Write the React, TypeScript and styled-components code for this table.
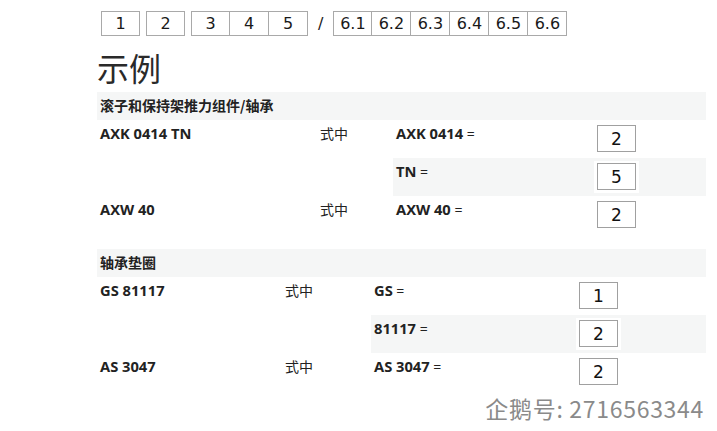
import React from 'react';
import styled, { createGlobalStyle } from 'styled-components';

type Part = { name: string; value: string };
type Item = { code: string; parts: Part[] };
type Section = { title: string; cols: [number, number, number]; items: Item[] };

const sections: Section[] = [
    {
        title: '滚子和保持架推力组件/轴承',
        cols: [220, 76, 201],
        items: [
            { code: 'AXK 0414 TN', parts: [{ name: 'AXK 0414', value: '2' }, { name: 'TN', value: '5' }] },
            { code: 'AXW 40', parts: [{ name: 'AXW 40', value: '2' }] },
        ],
    },
    {
        title: '轴承垫圈',
        cols: [185, 89, 205],
        items: [
            { code: 'GS 81117', parts: [{ name: 'GS', value: '1' }, { name: '81117', value: '2' }] },
            { code: 'AS 3047', parts: [{ name: 'AS 3047', value: '2' }] },
        ],
    },
];

const App: React.FC = () => {
    return (
        <>
            <GlobalStyle />
            <Page>
                <Nav>
                    <Step>1</Step>
                    <Step>2</Step>
                    <StepGroup>
                        <Step>3</Step>
                        <Step>4</Step>
                        <Step>5</Step>
                    </StepGroup>
                    <Slash>/</Slash>
                    <StepGroup>
                        {['6.1', '6.2', '6.3', '6.4', '6.5', '6.6'].map((s) => (
                            <Step key={s}>{s}</Step>
                        ))}
                    </StepGroup>
                </Nav>

                <Heading>示例</Heading>

                {sections.map((section) => (
                    <Table key={section.title} $c1={section.cols[0]} $c2={section.cols[1]}>
                        <Band>{section.title}</Band>
                        {section.items.map((item) => (
                            <React.Fragment key={item.code}>
                                <Code>{item.code}</Code>
                                <Where>式中</Where>
                                <Parts>
                                    {item.parts.map((part, index) => (
                                        <PartRow key={part.name} $shaded={index % 2 === 1} $label={section.cols[2]}>
                                            <PartLabel>
                                                <b>{part.name}</b> =
                                            </PartLabel>
                                            <InputCell>
                                                <Field readOnly value={part.value} />
                                            </InputCell>
                                            <span />
                                        </PartRow>
                                    ))}
                                </Parts>
                            </React.Fragment>
                        ))}
                    </Table>
                ))}

                <Watermark>企鹅号: 2716563344</Watermark>
            </Page>
        </>
    );
};

export default App;

const GlobalStyle = createGlobalStyle`
    body {
        margin: 0;
        background: #ffffff;
        font-family: "Open Sans", "Noto Sans CJK SC", sans-serif;
        color: #222222;
    }
`
const Page = styled.div`
    position: relative;
    width: 717px;
    height: 431px;
    box-sizing: border-box;
    padding: 11px 0 0 97px;
    overflow: hidden;
`
const Nav = styled.div`
    display: flex;
    align-items: center;
    gap: 6px;
    margin-left: 4px;
    height: 25px;
`
const StepGroup = styled.div`
    display: flex;
    & > div + div {
        border-left: none;
    }
`
const Step = styled.div`
    width: 39px;
    height: 25px;
    box-sizing: border-box;
    border: 1px solid #a9a9a9;
    display: flex;
    align-items: center;
    justify-content: center;
    font-family: "DejaVu Sans", sans-serif;
    font-size: 16px;
    color: #1a1a1a;
    background: #ffffff;
`
const Slash = styled.div`
    font-family: "DejaVu Sans", sans-serif;
    font-size: 16px;
    padding: 0 4px;
    color: #1a1a1a;
`
const Heading = styled.div`
    margin-top: 8px;
    font-family: "Noto Sans CJK SC", sans-serif;
    font-size: 32px;
    line-height: 46px;
    font-weight: 400;
    color: #2a2a2a;
`
const Table = styled.div<{ $c1: number; $c2: number }>`
    width: 609px;
    margin: 2px 0 15px 0;
    display: grid;
    grid-template-columns: ${(p) => p.$c1}px ${(p) => p.$c2}px 1fr;
    align-items: start;
`
const Band = styled.div`
    grid-column: 1 / -1;
    height: 28px;
    line-height: 27px;
    padding-left: 3px;
    background: #f5f6f6;
    font-family: "Noto Sans CJK SC", sans-serif;
    font-size: 14px;
    font-weight: 700;
    color: #222222;
`
const Code = styled.div`
    padding: 3px 3px 0 3px;
    line-height: 20px;
    font-size: 14.7px;
    font-weight: 700;
`
const Where = styled.div`
    padding: 3px 3px 0 3px;
    line-height: 20px;
    font-family: "Noto Sans CJK SC", sans-serif;
    font-size: 14px;
`
const Parts = styled.div`
    display: flex;
    flex-direction: column;
`
const PartRow = styled.div<{ $shaded: boolean; $label: number }>`
    height: 38px;
    display: grid;
    grid-template-columns: ${(p) => p.$label}px 45px 1fr;
    align-items: start;
    background: ${(p) => (p.$shaded ? '#f5f6f6' : '#ffffff')};
`
const PartLabel = styled.div`
    padding: 3px 3px 0 3px;
    line-height: 20px;
    font-size: 14px;
    b {
        font-size: 14.7px;
        font-weight: 700;
    }
`
const InputCell = styled.div`
    margin-top: 3px;
    padding: 2px 3px 3px 3px;
    background: #ffffff;
    display: flex;
`
const Field = styled.input`
    width: 39px;
    height: 27px;
    box-sizing: border-box;
    margin: 0;
    padding: 0;
    border: 1px solid #a0a0a0;
    border-radius: 0;
    outline: none;
    text-align: center;
    font-family: "DejaVu Sans", sans-serif;
    font-size: 17px;
    color: #111111;
    background: #ffffff;
`
const Watermark = styled.div`
    position: absolute;
    right: 13px;
    top: 391px;
    font-family: "Noto Sans CJK SC", sans-serif;
    font-size: 23px;
    color: #8a8a8a;
    letter-spacing: 0.7px;
`
